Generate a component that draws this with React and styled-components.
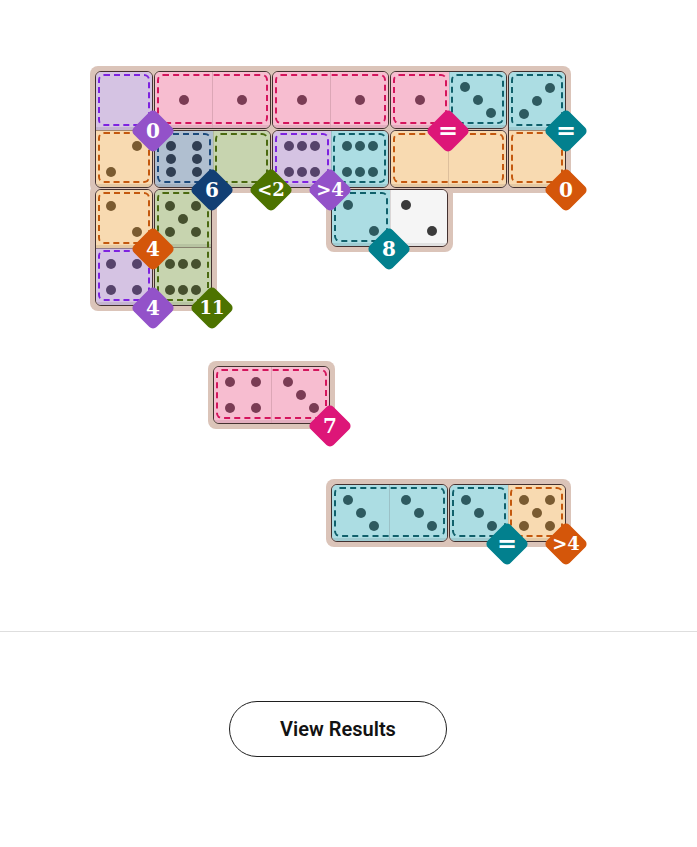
import React from "react";
import styled, { createGlobalStyle } from "styled-components";

const GlobalStyle = createGlobalStyle`
  html, body { margin: 0; padding: 0; background: #ffffff; }
  body { font-family: "Liberation Sans", Arial, sans-serif; }
`;

const REGION = {
  purple: { bg: "#d5c3e3", line: "#7e22e0", pip: "#56436b", badge: "#9352c9" },
  pink: { bg: "#f7bdd0", line: "#d4145c", pip: "#7a3c54", badge: "#dd1678" },
  teal: { bg: "#acdde3", line: "#10606b", pip: "#2e5a60", badge: "#02808e" },
  orange: { bg: "#f8dab1", line: "#c4580e", pip: "#7a5b31", badge: "#d4560a" },
  navy: { bg: "#b0bfd0", line: "#1c4a7c", pip: "#303e52", badge: "#123f74" },
  green: { bg: "#c7d4af", line: "#4b6a10", pip: "#46502e", badge: "#4d7300" },
  white: { bg: "#f5f5f5", line: null, pip: "#3b3b3b" },
};

const PIPS = {
  0: [],
  1: [[2, 2]],
  "2a": [[1, 1], [3, 3]],
  "2b": [[1, 3], [3, 1]],
  "3a": [[1, 1], [2, 2], [3, 3]],
  "3b": [[1, 3], [2, 2], [3, 1]],
  4: [[1, 1], [1, 3], [3, 1], [3, 3]],
  5: [[1, 1], [1, 3], [2, 2], [3, 1], [3, 3]],
  "6v": [[1, 1], [2, 1], [3, 1], [1, 3], [2, 3], [3, 3]],
  "6h": [[1, 1], [1, 2], [1, 3], [3, 1], [3, 2], [3, 3]],
};

const MATS = [
  { r: 0, c: 0, h: 2, w: 8 },
  { r: 2, c: 0, h: 2, w: 2 },
  { r: 2, c: 4, h: 1, w: 2 },
  { r: 5, c: 2, h: 1, w: 2 },
  { r: 7, c: 4, h: 1, w: 4 },
];

const DOMINOES = [
  { r: 0, c: 0, dir: "v", parts: [{ region: "purple", faces: [0] }, { region: "orange", faces: ["2b"] }] },
  { r: 0, c: 1, dir: "h", parts: [{ region: "pink", faces: [1, 1] }] },
  { r: 0, c: 3, dir: "h", parts: [{ region: "pink", faces: [1, 1] }] },
  { r: 0, c: 5, dir: "h", parts: [{ region: "pink", faces: [1] }, { region: "teal", faces: ["3a"] }] },
  { r: 0, c: 7, dir: "v", parts: [{ region: "teal", faces: ["3b"] }, { region: "orange", faces: [0] }] },
  { r: 1, c: 1, dir: "h", parts: [{ region: "navy", faces: ["6v"] }, { region: "green", faces: [0] }] },
  { r: 1, c: 3, dir: "h", parts: [{ region: "purple", faces: ["6h"] }, { region: "teal", faces: ["6h"] }] },
  { r: 1, c: 5, dir: "h", parts: [{ region: "orange", faces: [0, 0] }] },
  { r: 2, c: 4, dir: "h", parts: [{ region: "teal", faces: ["2a"] }, { region: "white", faces: ["2a"] }] },
  { r: 2, c: 0, dir: "v", parts: [{ region: "orange", faces: ["2a"] }, { region: "purple", faces: [4] }] },
  { r: 2, c: 1, dir: "v", parts: [{ region: "green", faces: [5, "6h"] }] },
  { r: 5, c: 2, dir: "h", parts: [{ region: "pink", faces: [4, "3a"] }] },
  { r: 7, c: 4, dir: "h", parts: [{ region: "teal", faces: ["3a", "3a"] }] },
  { r: 7, c: 6, dir: "h", parts: [{ region: "teal", faces: ["3a"] }, { region: "orange", faces: [5] }] },
];

const BADGES = [
  { r: 0, c: 0, region: "purple", text: "0" },
  { r: 0, c: 5, region: "pink", text: "=" },
  { r: 0, c: 7, region: "teal", text: "=" },
  { r: 1, c: 1, region: "navy", text: "6" },
  { r: 1, c: 2, region: "green", text: "<2" },
  { r: 1, c: 3, region: "purple", text: ">4" },
  { r: 1, c: 7, region: "orange", text: "0" },
  { r: 2, c: 0, region: "orange", text: "4" },
  { r: 2, c: 4, region: "teal", text: "8" },
  { r: 3, c: 0, region: "purple", text: "4" },
  { r: 3, c: 1, region: "green", text: "11" },
  { r: 5, c: 3, region: "pink", text: "7" },
  { r: 7, c: 6, region: "teal", text: "=" },
  { r: 7, c: 7, region: "orange", text: ">4" },
];

const Page = styled.div`
  display: flex;
  flex-direction: column;
  width: 697px;
  min-height: 847px;
  background: #fff;
`;

const BoardArea = styled.section`
  padding: 71px 0 89px 95px;
`;

const Board = styled.div`
  display: grid;
  grid-template-columns: repeat(8, 58px);
  grid-template-rows: repeat(8, 58px);
  gap: 1px;
`;

const Mat = styled.div`
  grid-row: ${(p) => p.$r + 1} / span ${(p) => p.$h};
  grid-column: ${(p) => p.$c + 1} / span ${(p) => p.$w};
  margin: -5px;
  background: #dbc4b9;
  border-radius: 8px;
`;

const DominoBox = styled.div`
  grid-row: ${(p) => p.$r + 1} / span ${(p) => (p.$dir === "v" ? 2 : 1)};
  grid-column: ${(p) => p.$c + 1} / span ${(p) => (p.$dir === "h" ? 2 : 1)};
  display: flex;
  flex-direction: ${(p) => (p.$dir === "v" ? "column" : "row")};
  box-sizing: border-box;
  border: 1px solid rgba(40, 24, 24, 0.85);
  border-radius: 6px;
  overflow: hidden;
  position: relative;
  z-index: 1;
`;

const Part = styled.div`
  flex: ${(p) => p.$n} 1 0;
  display: flex;
  flex-direction: ${(p) => (p.$dir === "v" ? "column" : "row")};
  position: relative;
  background: ${(p) => p.$bg};
  &::after {
    content: "";
    display: ${(p) => (p.$line ? "block" : "none")};
    position: absolute;
    inset: 2px 2px 4px 2px;
    border: 2px dashed ${(p) => p.$line};
    border-radius: 6px;
    pointer-events: none;
  }
`;

const Cell = styled.div`
  flex: 1 1 0;
  display: flex;
  align-items: center;
  justify-content: center;
  box-shadow: inset 0 -3px 0 rgba(0, 0, 0, 0.08);
  ${(p) =>
    p.$divider
      ? p.$dir === "v"
        ? "border-top: 1px solid rgba(60, 30, 30, 0.45);"
        : "border-left: 1px solid rgba(60, 30, 30, 0.14);"
      : ""}
`;

const PipGrid = styled.div`
  display: grid;
  grid-template-columns: repeat(3, 10px);
  grid-template-rows: repeat(3, 10px);
  gap: 3px;
`;

const Pip = styled.span`
  grid-row: ${(p) => p.$r};
  grid-column: ${(p) => p.$c};
  width: 10px;
  height: 10px;
  border-radius: 50%;
  background: ${(p) => p.$color};
`;

const Badge = styled.div`
  grid-row: ${(p) => p.$r + 1};
  grid-column: ${(p) => p.$c + 1};
  align-self: end;
  justify-self: end;
  width: 46px;
  height: 46px;
  margin: 0 -23px -25px 0;
  position: relative;
  z-index: 3;
  display: flex;
  align-items: center;
  justify-content: center;
  color: #ffffff;
  font-family: "DejaVu Serif", "Liberation Serif", serif;
  font-weight: 700;
  font-size: ${(p) => (p.$wide ? "18px" : p.$eq ? "24px" : "20px")};
  line-height: 1;
  &::before {
    content: "";
    position: absolute;
    inset: 7px;
    background: ${(p) => p.$color};
    border-radius: 5px;
    transform: rotate(45deg);
    z-index: -1;
  }
`;

const Divider = styled.div`
  height: 1px;
  background: #dedede;
`;

const Footer = styled.footer`
  padding: 69px 0 0 229px;
`;

const ResultsButton = styled.button`
  width: 218px;
  height: 56px;
  box-sizing: border-box;
  border: 1px solid #1f1f1f;
  border-radius: 28px;
  background: #ffffff;
  color: #121212;
  font-family: Roboto, "Liberation Sans", Arial, sans-serif;
  font-weight: 600;
  font-size: 20px;
  cursor: pointer;
`;

function Domino({ d }) {
  let idx = 0;
  return (
    <DominoBox $r={d.r} $c={d.c} $dir={d.dir}>
      {d.parts.map((part, i) => {
        const reg = REGION[part.region];
        return (
          <Part key={i} $n={part.faces.length} $dir={d.dir} $bg={reg.bg} $line={reg.line}>
            {part.faces.map((f, j) => {
              const divider = idx > 0;
              idx += 1;
              return (
                <Cell key={j} $dir={d.dir} $divider={divider}>
                  <PipGrid>
                    {PIPS[f].map(([r, c], k) => (
                      <Pip key={k} $r={r} $c={c} $color={reg.pip} />
                    ))}
                  </PipGrid>
                </Cell>
              );
            })}
          </Part>
        );
      })}
    </DominoBox>
  );
}

export default function App() {
  return (
    <Page>
      <GlobalStyle />
      <BoardArea>
        <Board>
          {MATS.map((m, i) => (
            <Mat key={i} $r={m.r} $c={m.c} $h={m.h} $w={m.w} />
          ))}
          {DOMINOES.map((d, i) => (
            <Domino key={i} d={d} />
          ))}
          {BADGES.map((b, i) => (
            <Badge
              key={i}
              $r={b.r}
              $c={b.c}
              $color={REGION[b.region].badge}
              $wide={b.text.length > 1}
              $eq={b.text === "="}
            >
              {b.text}
            </Badge>
          ))}
        </Board>
      </BoardArea>
      <Divider />
      <Footer>
        <ResultsButton type="button">View Results</ResultsButton>
      </Footer>
    </Page>
  );
}
